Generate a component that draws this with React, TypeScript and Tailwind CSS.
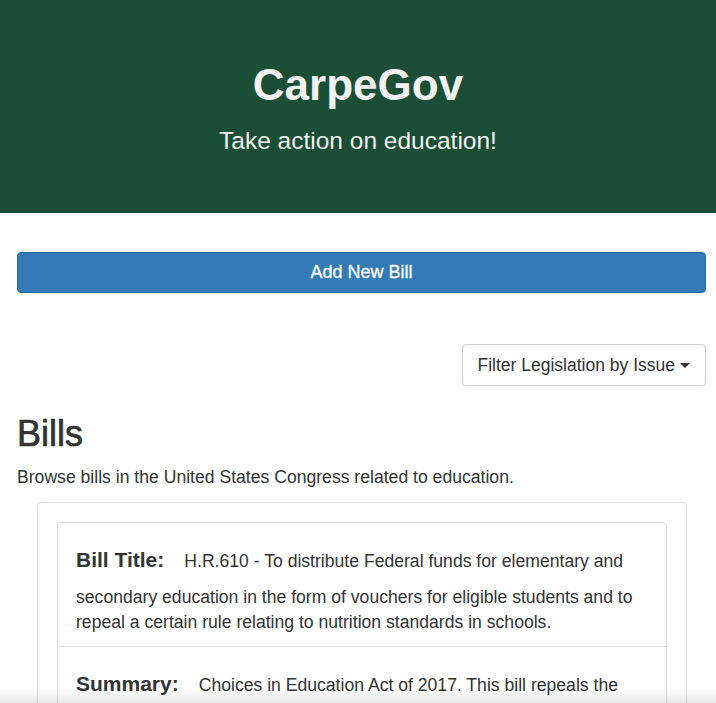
import React from "react";

type Bill = {
  id: string;
  title: string;
  summary: string;
};

const bills: Bill[] = [
  {
    id: "hr610",
    title:
      "H.R.610 - To distribute Federal funds for elementary and secondary education in the form of vouchers for eligible students and to repeal a certain rule relating to nutrition standards in schools.",
    summary:
      "Choices in Education Act of 2017. This bill repeals the Elementary and Secondary Education Act of 1965 and limits the authority of the Department of Education.",
  },
];

const Field: React.FC<{ label: string; text: string }> = ({ label, text }) => (
  <div className="px-[18px] pt-[12px] pb-[11px] border-b border-[#ddd] last:border-b-0">
    <p className="text-[17.6px] leading-[25px] text-[#333]">
      <span className="inline-block align-baseline text-[21px] font-bold leading-[50px] mr-[20px]">
        {label}
      </span>
      {text}
    </p>
  </div>
);

const App: React.FC = () => {
  return (
    <div className="min-h-screen bg-white font-['Liberation_Sans',Arial,sans-serif] text-[#333]">
      <header className="h-[213px] bg-[#1a4e37] flex flex-col items-center justify-center text-[#f2f2f2]">
        <h1 className="text-[44px] font-bold leading-none mt-[4px]">CarpeGov</h1>
        <p className="text-[24.5px] font-light mt-[22px] leading-none">
          Take action on education!
        </p>
      </header>

      <main className="pl-[17px] pr-[10px] pt-[39px]">
        <button className="w-full h-[41px] rounded-[4px] bg-[#337ab7] border border-[#2e6da4] text-white text-[18px] [-webkit-text-stroke:0.3px_white]">
          Add New Bill
        </button>

        <div className="flex justify-end mt-[51px]">
          <button className="h-[42px] px-[15px] rounded-[4px] border border-[#ccc] bg-white text-[#333] text-[17.5px] flex items-center">
            Filter Legislation by Issue
            <span className="ml-[5px] inline-block w-0 h-0 border-l-[5px] border-r-[5px] border-t-[5px] border-l-transparent border-r-transparent border-t-[#333]" />
          </button>
        </div>

        <h2 className="text-[36px] font-medium leading-none mt-[30px] [-webkit-text-stroke:0.7px_#333]">
          Bills
        </h2>
        <p className="text-[17.6px] mt-[12px]">
          Browse bills in the United States Congress related to education.
        </p>

        <div className="mt-[12px] ml-[20px] mr-[19px] border border-[#ddd] rounded-[4px] p-[19px]">
          {bills.map((bill) => (
            <div key={bill.id} className="border border-[#ddd] rounded-[4px]">
              <Field label="Bill Title:" text={bill.title} />
              <Field label="Summary:" text={bill.summary} />
            </div>
          ))}
        </div>
      </main>

      <div className="fixed left-0 right-0 bottom-0 h-[14px] pointer-events-none bg-gradient-to-b from-transparent to-black/10" />
    </div>
  );
};

export default App;
